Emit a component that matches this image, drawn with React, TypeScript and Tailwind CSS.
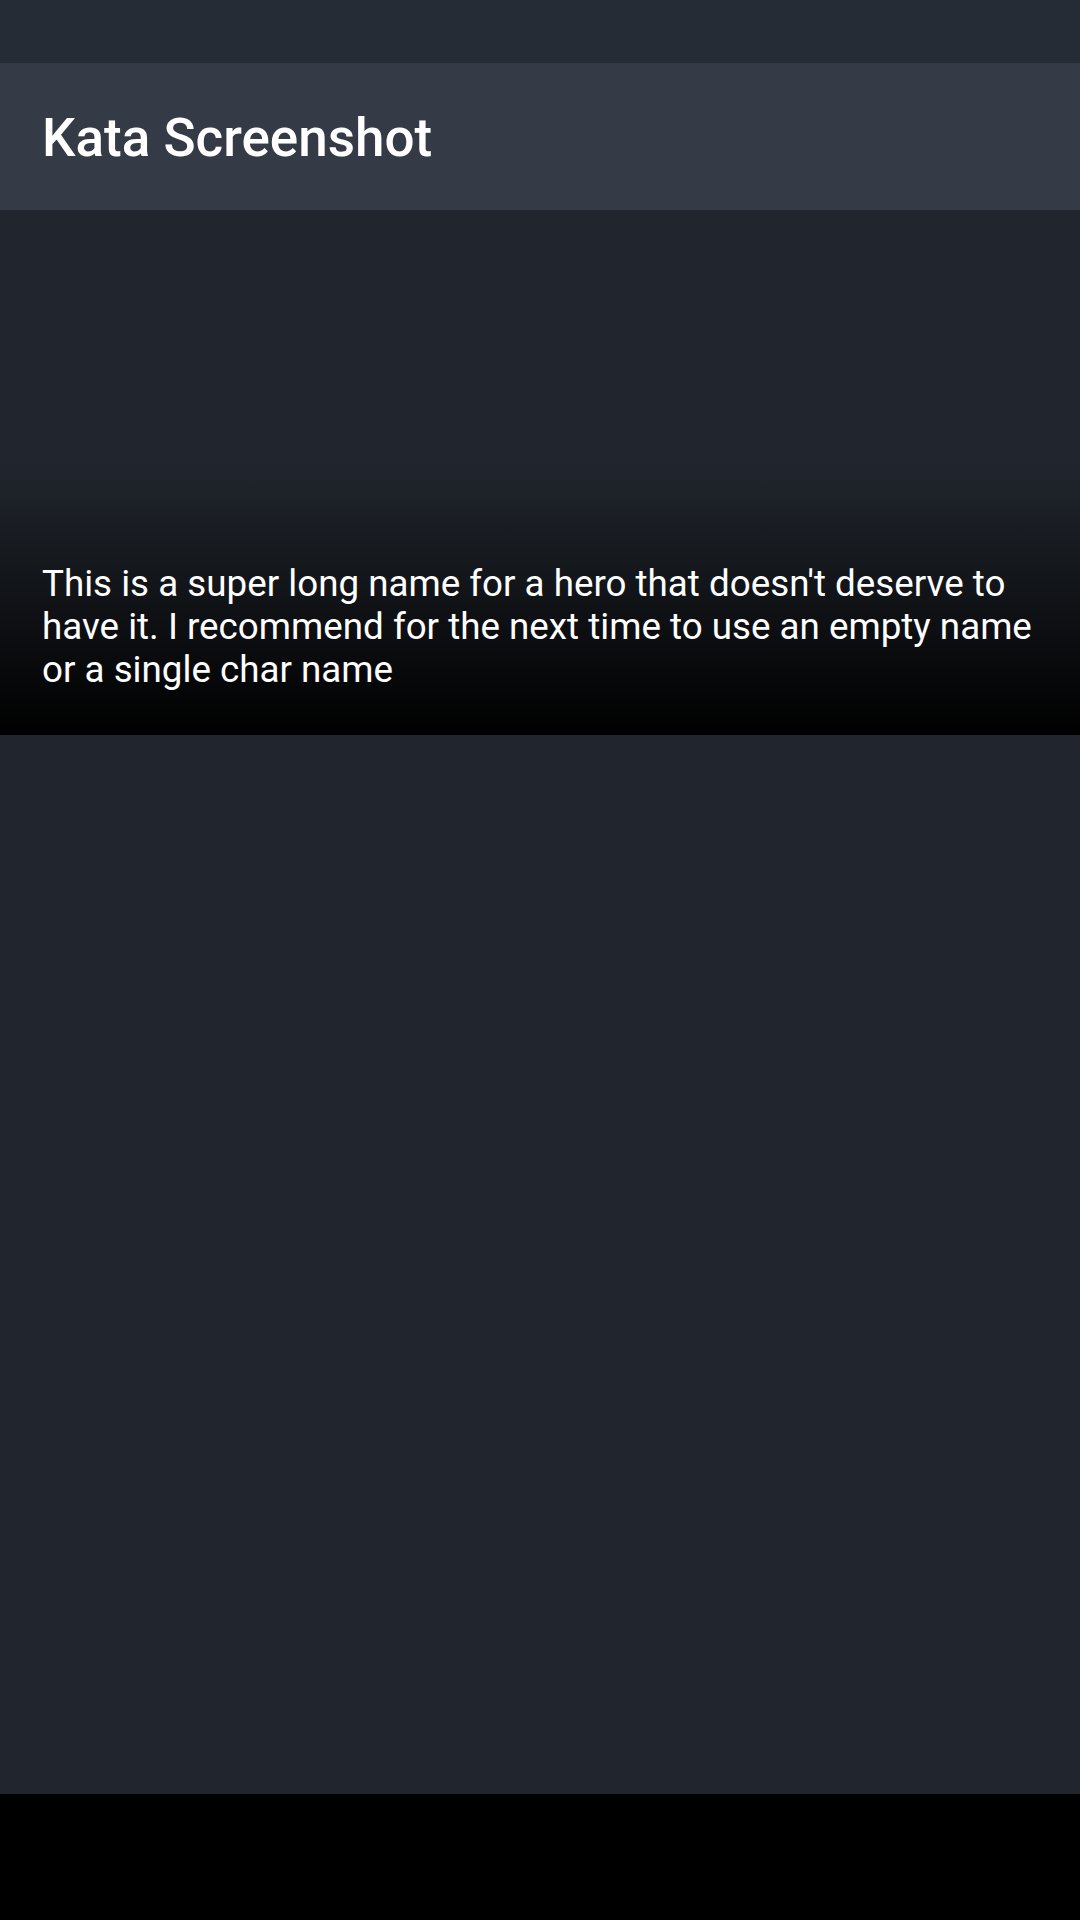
import React from "react";

export default function App() {
  return (
    <div className="w-[1080px] h-[1920px] flex flex-col bg-[#21262e] overflow-hidden" style={{ fontFamily: "Roboto, 'Noto Sans', sans-serif" }}>
      <div className="h-[63px] shrink-0 bg-[#262c36]" />
      <div className="h-[147px] shrink-0 bg-[#343a46] flex items-center px-[42px] pt-[4px]">
        <h1 className="text-[53px] font-medium text-white leading-none">Kata Screenshot</h1>
      </div>
      <div className="h-[525px] shrink-0 flex flex-col justify-end bg-[linear-gradient(to_bottom,#21262e_0%,#21262e_48%,#000000_100%)] px-[42px] pb-[44px]">
        <p className="text-[36.75px] leading-[43px] text-white">
          This is a super long name for a hero that doesn't deserve to have it. I recommend for the next time to use an empty name or a single char name
        </p>
      </div>
      <div className="flex-1 bg-[#21262e]" />
      <div className="h-[126px] shrink-0 bg-black" />
    </div>
  );
}
